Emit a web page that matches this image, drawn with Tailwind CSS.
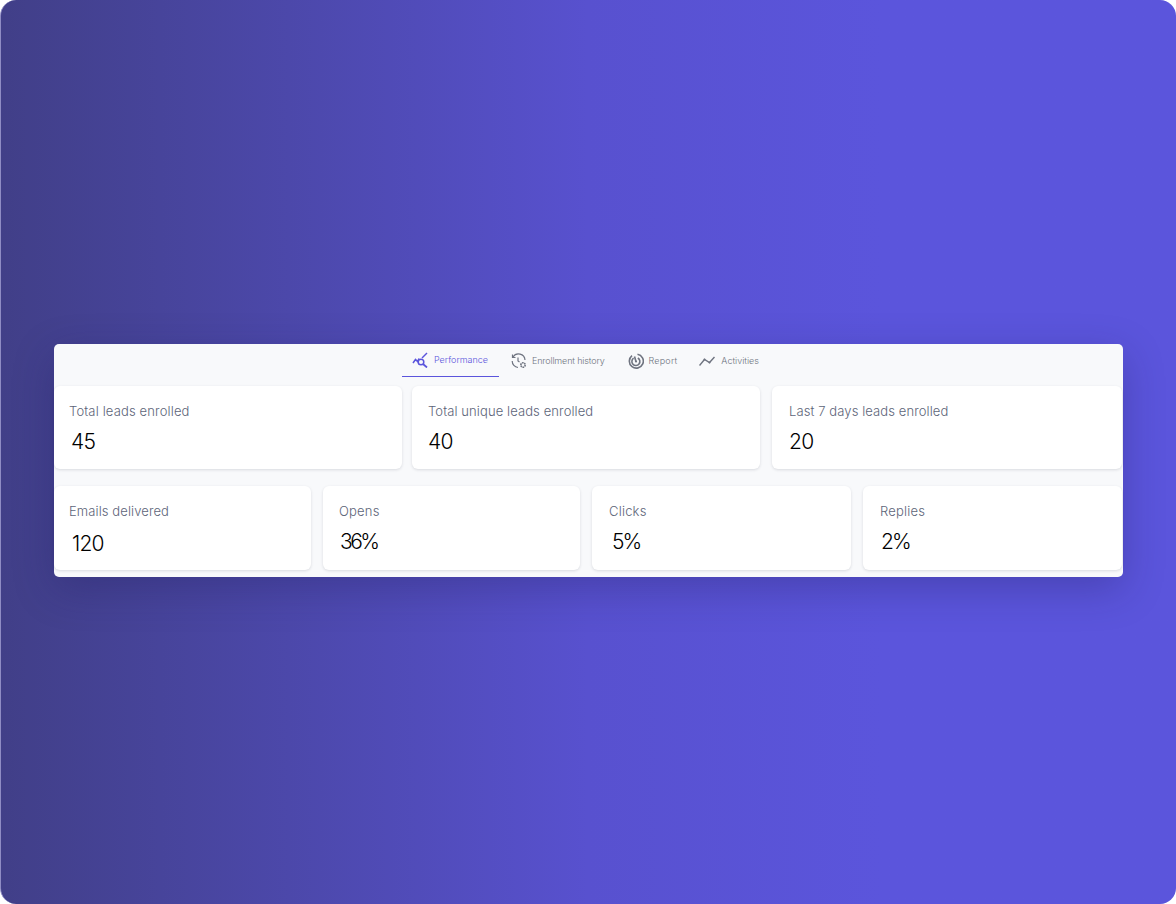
<!DOCTYPE html>
<html lang="en">
<head>
    <meta charset="UTF-8">
    <meta name="viewport" content="width=device-width, initial-scale=1.0">
    <script src="https://cdn.jsdelivr.net/npm/@tailwindcss/browser@4"></script>
    <title>Performance</title>
</head>
<body class="bg-white font-['Inter',sans-serif]">
    <div class="h-[904px] w-[1176px] overflow-hidden rounded-2xl border-l border-l-[#8f8cc4] bg-gradient-to-r from-[#413f88] via-[#5851cf] via-50% to-[#5b55dc] to-75% pl-[53px] pt-[344px]">
        <!-- Panel -->
        <div class="h-[233px] w-[1069px] rounded-[5px] bg-[#f8f9fb] shadow-[0_12px_40px_rgba(30,27,90,0.3)]">
            <!-- Tabs -->
            <nav class="flex h-[42px] items-start pl-[348px] text-[9px] font-light">
                <a class="flex h-[33px] w-[97px] items-center gap-[6px] border-b border-[#5b55dc] pl-[10px] text-[#5b55dc]">
                    <svg class="h-[16px] w-[16px]" viewBox="0 0 16 16" fill="none" stroke="currentColor" stroke-width="1.5">
                        <path d="M1 11 L3.5 7.5 L5.5 9.5 L7 6.5"/>
                        <path d="M10 6 L15 1"/>
                        <circle cx="9" cy="10" r="2.8"/>
                        <path d="M11 12 L15 15.5" stroke-width="1.8"/>
                    </svg>
                    Performance
                </a>
                <a class="ml-[12px] flex h-[33px] items-center gap-[5px] text-[#6f7480]">
                    <svg class="h-[16px] w-[16px]" viewBox="0 0 16 16" fill="none" stroke="currentColor" stroke-width="1.2">
                        <path d="M2 4 A6.5 6.5 0 0 1 14 7"/>
                        <path d="M1.5 1.5 V4.5 H4.5"/>
                        <path d="M1.2 8 A6.5 6.5 0 0 0 7 14.5"/>
                        <path d="M7 4.5 V8 L8.5 9"/>
                        <circle cx="12" cy="12" r="2.2" stroke-width="1.6" stroke-dasharray="1.5 0.6"/>
                    </svg>
                    <span class="tracking-[-0.15px]">Enrollment history</span>
                </a>
                <a class="ml-[23px] flex h-[33px] items-center gap-[5px] text-[#6f7480]">
                    <svg class="h-[16px] w-[16px]" viewBox="0 0 16 16" fill="none" stroke="currentColor" stroke-width="1.6">
                        <path d="M9.5 1.2 A7 7 0 1 1 4 2.6"/>
                        <path d="M9.8 5 A4 4 0 1 1 5.6 5.2"/>
                        <path d="M6.5 3.5 L8 8.5"/>
                        <circle cx="8" cy="8.5" r="1.1" fill="currentColor" stroke="none"/>
                    </svg>
                    <span class="tracking-[0.2px]">Report</span>
                </a>
                <a class="ml-[22px] flex h-[33px] items-center gap-[6px] text-[#6f7480]">
                    <svg class="h-[16px] w-[16px]" viewBox="0 0 16 16" fill="none" stroke="currentColor" stroke-width="1.4">
                        <path d="M0.5 12.5 L5.5 6.5 L10.5 9.5 L15.5 4"/>
                        <circle cx="5.5" cy="6.5" r="1" fill="currentColor" stroke="none"/>
                        <circle cx="10.5" cy="9.5" r="1" fill="currentColor" stroke="none"/>
                    </svg>
                    Activities
                </a>
            </nav>

            <!-- Top cards -->
            <div class="flex pr-px">
                <div class="h-[83px] w-[348px] rounded-md bg-white pl-[15px] pt-[16px] shadow-[0_1px_3px_rgba(30,35,60,0.14)]">
                    <p class="text-[13px] leading-[18px] font-light tracking-[0.15px] text-[#5d6579]">Total leads enrolled</p>
                    <p class="mt-[9px] pl-[2px] text-[21px] leading-[26px] font-light tracking-[-0.6px] text-black">45</p>
                </div>
                <div class="ml-[10px] h-[83px] w-[348px] rounded-md bg-white pl-[16px] pt-[16px] shadow-[0_1px_3px_rgba(30,35,60,0.14)]">
                    <p class="text-[13px] leading-[18px] font-light tracking-[0.1px] text-[#5d6579]">Total unique leads enrolled</p>
                    <p class="mt-[9px] text-[21px] leading-[26px] font-light tracking-[-0.6px] text-black">40</p>
                </div>
                <div class="ml-[12px] h-[83px] w-[350px] rounded-md bg-white pl-[17px] pt-[16px] shadow-[0_1px_3px_rgba(30,35,60,0.14)]">
                    <p class="text-[13px] leading-[18px] font-light tracking-[0.1px] text-[#5d6579]">Last 7 days leads enrolled</p>
                    <p class="mt-[9px] text-[21px] leading-[26px] font-light tracking-[-0.6px] text-black">20</p>
                </div>
            </div>

            <!-- Bottom cards -->
            <div class="mt-[17px] flex pr-px">
                <div class="h-[84px] w-[257px] rounded-md bg-white pl-[15px] pt-[16px] shadow-[0_1px_3px_rgba(30,35,60,0.14)]">
                    <p class="text-[13px] leading-[18px] font-light tracking-[0.1px] text-[#5d6579]">Emails delivered</p>
                    <p class="mt-[11px] pl-[3px] text-[21px] leading-[26px] font-light tracking-[-0.8px] text-black">120</p>
                </div>
                <div class="ml-[12px] h-[84px] w-[257px] rounded-md bg-white pl-[16px] pt-[16px] shadow-[0_1px_3px_rgba(30,35,60,0.14)]">
                    <p class="text-[13px] leading-[18px] font-light tracking-[0.2px] text-[#5d6579]">Opens</p>
                    <p class="mt-[9px] pl-px text-[21px] leading-[26px] font-light tracking-[-2.5px] text-black">36%</p>
                </div>
                <div class="ml-[12px] h-[84px] w-[259px] rounded-md bg-white pl-[17px] pt-[16px] shadow-[0_1px_3px_rgba(30,35,60,0.14)]">
                    <p class="text-[13px] leading-[18px] font-light tracking-[0.2px] text-[#5d6579]">Clicks</p>
                    <p class="mt-[9px] pl-[3px] text-[21px] leading-[26px] font-light tracking-[-2px] text-black">5%</p>
                </div>
                <div class="ml-[12px] h-[84px] w-[259px] rounded-md bg-white pl-[17px] pt-[16px] shadow-[0_1px_3px_rgba(30,35,60,0.14)]">
                    <p class="text-[13px] leading-[18px] font-light tracking-[0.2px] text-[#5d6579]">Replies</p>
                    <p class="mt-[9px] pl-px text-[21px] leading-[26px] font-light tracking-[-2px] text-black">2%</p>
                </div>
            </div>
        </div>
    </div>
</body>
</html>
